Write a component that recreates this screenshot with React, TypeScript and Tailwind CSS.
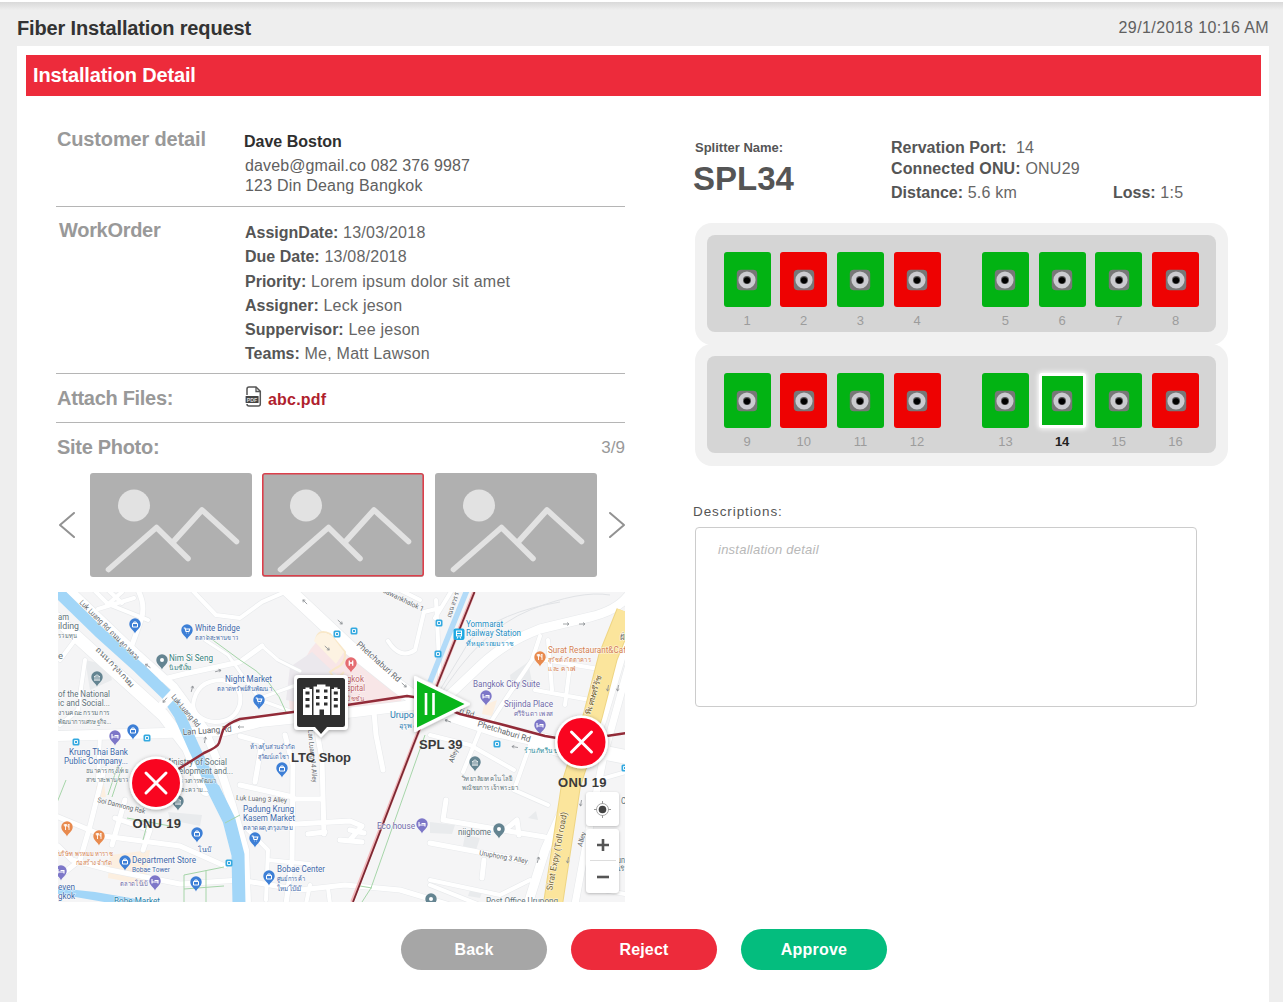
import React from "react";

type Port = { n: number; free: boolean; selected?: boolean };

const ROWS: Port[][] = [
  [1, 2, 3, 4, 5, 6, 7, 8].map((n) => ({ n, free: ![2, 4, 8].includes(n) })),
  [9, 10, 11, 12, 13, 14, 15, 16].map((n) => ({ n, free: ![10, 12, 16].includes(n), selected: n === 14 })),
];

const WORK_ORDER: [string, string][] = [
  ["AssignDate:", "13/03/2018"],
  ["Due Date:", "13/08/2018"],
  ["Priority:", "Lorem ipsum dolor sit amet"],
  ["Assigner:", "Leck jeson"],
  ["Suppervisor:", "Lee jeson"],
  ["Teams:", "Me, Matt Lawson"],
];

function Field({ label, value }: { label: string; value: string }) {
  return (
    <div className="whitespace-nowrap">
      <span className="font-bold">{label}</span>
      <span className="tracking-[0.24px] text-[#666]"> {value}</span>
    </div>
  );
}

function Socket() {
  return (
    <svg width="22" height="22" viewBox="0 0 22 22">
      <rect x="0.8" y="0.8" width="20.4" height="20.4" rx="4" fill="#777" />
      <circle cx="11" cy="11" r="8.6" fill="#cbcbd0" />
      <circle cx="11" cy="11" r="4" fill="#555" />
      <circle cx="11" cy="11.3" r="3.1" fill="#000" />
    </svg>
  );
}

function PortTile({ port }: { port: Port }) {
  const fill = port.free ? "bg-[#02b313]" : "bg-[#ee0202]";
  return (
    <div className="flex w-[47px] flex-col items-center">
      <div
        className={`flex h-[55px] w-[47px] items-center justify-center rounded-[3px] ${fill} ${
          port.selected ? "border-[3px] border-white shadow-[0_0_5px_1px_#ffffff]" : ""
        }`}
      >
        <Socket />
      </div>
      <span
        className={`mt-[6px] text-[13px] leading-[16px] ${
          port.selected ? "font-bold text-[#222]" : "text-[#9c9c9c]"
        }`}
      >
        {port.n}
      </span>
    </div>
  );
}

function PortRow({ ports }: { ports: Port[] }) {
  return (
    <div className="h-[122px] w-[533px] rounded-[17px] bg-[#f1f1f1] p-3">
      <div className="flex h-[97px] w-[509px] justify-between rounded-[8px] bg-[#d5d5d5] pt-[17px] pr-[17px] pl-[16.5px]">
        {[ports.slice(0, 4), ports.slice(4)].map((group, i) => (
          <div key={i} className="flex gap-[9.7px]">
            {group.map((p) => (
              <PortTile key={p.n} port={p} />
            ))}
          </div>
        ))}
      </div>
    </div>
  );
}

function Thumb({ active }: { active?: boolean }) {
  return (
    <div className="h-[103.500px] w-[162px] overflow-hidden rounded-[3px] bg-[#b0b0b0]">
      <svg width="162" height="104" viewBox="0 0 162 104" fill="none">
        <circle cx="44" cy="32.5" r="16" fill="#e2e2e2" />
        <g stroke="#e2e2e2" strokeWidth="5.6" strokeLinecap="round" strokeLinejoin="round">
          <path d="M18.5 96.5L66.5 54.5L98 85.5" />
          <path d="M84 68L112 37L146.500 68.500" />
        </g>
        {active && <rect x="0.8" y="0.8" width="160.400" height="102" rx="2" stroke="#dc3f4b" strokeWidth="1.600" />}
      </svg>
    </div>
  );
}

function PdfIcon() {
  return (
    <svg width="17" height="21" viewBox="0 0 17 21" fill="none" className="-mt-[3px]">
      <path d="M2 9V3Q2 1 4 1H11L15.300 5.300V18Q15.300 20 13.300 20H4Q2 20 2 18" stroke="#555" strokeWidth="1.5" />
      <path d="M11 1V5.500H15.300" stroke="#555" strokeWidth="1.3" />
      <rect x="0.600" y="10" width="13" height="7" rx="0.600" fill="#444" />
      <text x="1.800" y="15.700" fontSize="6" fontWeight="700" fill="#ddd" textLength="10.500" lengthAdjust="spacingAndGlyphs">PDF</text>
    </svg>
  );
}

const WHITE_ROADS: [string, number][] = [
  ["M56 618L100 658L163 715L188 748L206 790", 12],
  ["M70 590L136 653L174 687L204 728L219 765L232 805L245 850L247 904", 8],
  ["M56 736L165 733L225 731L260 722L347 713L430 703", 10],
  ["M288 590L318 618L350 648L395 684L425 706L500 731L560 744L626 757", 14],
  ["M430 713Q455 690 480 666T540 629L590 617Q616 611 628 596", 9],
  ["M626 640L602 720L572 790L545 850L528 904", 9],
  ["M628 668L604 755L585 850L575 904", 7],
  ["M94 590L108 604L148 620M108 590L122 603M106 606L122 592M98 609L134 598", 4],
  ["M138 590Q146 606 141 620L132 645", 5],
  ["M192 590L216 615L240 618L262 602L285 592", 4],
  ["M160 680L184 674L240 662L262 646", 5],
  ["M205 640L228 655L260 700L293 712", 3],
  ["M193 705Q196 680 222 680Q243 684 240 704Q235 722 215 722Q195 720 193 705Z", 4],
  ["M262 646L278 660L300 671M255 700L310 680", 3],
  ["M285 735L293 765L292 860L286 904M293 797L240 785M240 736L262 742L255 782", 5],
  ["M315 720L322 760L324 834M293 799L320 799M296 824L350 821L362 826L350 840M308 834L325 832M350 830L364 833M340 840L362 842", 5],
  ["M374 712L376 735L383 770", 5],
  ["M56 816L104 836L180 846L225 866", 5],
  ["M104 770L90 826L80 860L60 876M125 800L112 845M115 818L150 830L143 850", 5],
  ["M58 846L72 860L110 870L180 884L240 880L300 890L345 885L400 890L450 905", 5],
  ["M248 830L268 850L266 900M268 860L310 864M310 885L306 904M328 888L330 904", 4],
  ["M446 800L443 820L502 830L545 837M430 843L505 857L526 862M505 830L517 820L519 835M484 860L482 878", 5],
  ["M463 772L480 730M514 790L530 745L560 755M514 790L548 805M430 735L470 745L514 770", 4],
  ["M540 636L532 660L505 700L492 720M545 660L605 670M535 690L590 700M548 640L552 690M570 665L565 705", 4],
  ["M388 641Q400 660 415 650L424 612L440 608M420 600L400 590", 4],
  ["M452 590L435 618M436 600L440 680", 4],
  ["M430 885L480 905M430 880L500 895L530 880M602 890L625 894M598 780L626 772", 4],
  ["M60 660L75 640M85 660L78 710L60 725M100 735L98 780M60 590L76 605", 4],
];

type Tint = "blue" | "grey" | "purple" | "orange" | "red";
const TINTS: Record<Tint, string> = {
  blue: "#3d7fd6",
  grey: "#648491",
  purple: "#7d77c8",
  orange: "#e88a4e",
  red: "#e56b70",
};

const PINS: [number, number, Tint, "bag" | "cart" | "dot" | "bed" | "food" | "bank" | "H"][] = [
  [135, 625, "blue", "bag"], [187, 631, "blue", "cart"], [162, 661, "grey", "dot"], [97, 678, "grey", "bank"],
  [133, 731, "blue", "bag"], [115, 737, "purple", "bed"], [259, 701, "blue", "cart"], [351, 664, "red", "H"],
  [540, 658, "orange", "food"], [486, 697, "purple", "bed"], [540, 726, "purple", "bed"], [475, 763, "grey", "bank"],
  [499, 830, "grey", "dot"], [422, 825, "purple", "bed"], [282, 769, "blue", "bag"], [255, 839, "blue", "cart"],
  [269, 877, "blue", "bag"], [197, 834, "blue", "bag"], [196, 883, "blue", "bag"], [125, 862, "blue", "bag"],
  [155, 882, "purple", "bed"], [67, 828, "orange", "food"], [99, 837, "orange", "food"], [61, 872, "purple", "bed"],
  [178, 802, "grey", "bank"], [431, 900, "grey", "dot"],
];

function Pin({ x, y, tint, glyph }: { x: number; y: number; tint: Tint; glyph: string }) {
  return (
    <g transform={`translate(${x} ${y})`}>
      <path d="M0 8.500C-1 5-5.700 3.500-5.700-1A5.700 5.700 0 0 1 5.700-1C5.700 3.500 1 5 0 8.500Z" fill={TINTS[tint]} />
      {glyph === "bag" && <path d="M-2.500 -1.500H2.500V2H-2.500ZM-1.200-1.500V-3H1.200V-1.500" fill="none" stroke="#fff" strokeWidth="1" />}
      {glyph === "cart" && <path d="M-3.300-3H-2L-1 0.500H2L2.800-2H-1.500M-1 2H-0.500M1.500 2H2" fill="none" stroke="#fff" strokeWidth="1.100" />}
      {glyph === "dot" && <circle cy="-1" r="2" fill="#fff" />}
      {glyph === "bed" && <path d="M-3-3V1.500M-3 0H3V1.500M-0.500-1.500H3V0" fill="none" stroke="#fff" strokeWidth="1.100" />}
      {glyph === "food" && <path d="M-1.500-4V2M-2.700-4V-2H-0.300V-4M2-4V2M2-4Q0.800-3 1-1H2" fill="none" stroke="#fff" strokeWidth="0.900" />}
      {glyph === "bank" && <path d="M-3-1L0-3.200L3-1ZM-2 0V2M0 0V2M2 0V2M-3 2.200H3" fill="none" stroke="#fff" strokeWidth="0.800" />}
      {glyph === "H" && <path d="M-1.700-3.500V1.700M1.700-3.500V1.700M-1.700-1H1.700" fill="none" stroke="#fff" strokeWidth="1.300" />}
    </g>
  );
}

type Label = { t: string; x: number; y: number; w: number; c: string; s?: number; r?: number };
const B = "#3e68a8";
const G = "#5f7379";
const P = "#6f6aa8";
const O = "#d47f51";
const T = "#268fc4";
const K = "#62666a";

const LABELS: Label[] = [
  { t: "White Bridge", x: 195, y: 631, w: 45, c: B },
  { t: "ตลาดสะพานขาว", x: 195, y: 640, w: 43, c: B, s: 7 },
  { t: "Nim Si Seng", x: 169, y: 661, w: 44, c: "#35827c" },
  { t: "นิมซีเส็ง", x: 169, y: 670, w: 22, c: "#35827c", s: 7 },
  { t: "am", x: 58, y: 620, w: 11, c: G },
  { t: "ilding", x: 58, y: 629, w: 21, c: G },
  { t: "รวมทุน", x: 58, y: 638, w: 19, c: G, s: 7 },
  { t: "e", x: 58, y: 659, w: 5, c: G },
  { t: "of the National", x: 58, y: 697, w: 52, c: G },
  { t: "ic and Social...", x: 58, y: 706, w: 52, c: G },
  { t: "งานคณะกรรมการ", x: 58, y: 715, w: 52, c: G, s: 7 },
  { t: "พัฒนาการเศรษฐกิจ...", x: 58, y: 724, w: 53, c: G, s: 7 },
  { t: "Night Market", x: 225, y: 682, w: 47, c: B },
  { t: "ตลาดทรัพย์สินพัฒนา", x: 217, y: 691, w: 55, c: B, s: 7 },
  { t: "Krung Thai Bank", x: 69, y: 755, w: 59, c: B },
  { t: "Public Company...", x: 64, y: 764, w: 64, c: B },
  { t: "ธนาคารกรุงไทย", x: 86, y: 773, w: 42, c: G, s: 7 },
  { t: "สาขาสะพานขาว", x: 86, y: 782, w: 42, c: G, s: 7 },
  { t: "Ministry of Social", x: 164, y: 765, w: 63, c: G },
  { t: "Development and...", x: 166, y: 774, w: 67, c: G },
  { t: "กระทรวงการพัฒนา", x: 166, y: 783, w: 50, c: G, s: 7 },
  { t: "สังคมและความ...", x: 163, y: 792, w: 45, c: G, s: 7 },
  { t: "โบเบ๊", x: 198, y: 852, w: 13, c: B, s: 7 },
  { t: "Department Store", x: 132, y: 863, w: 64, c: B },
  { t: "Bobae Tower", x: 132, y: 872, w: 38, c: B, s: 7 },
  { t: "ตลาดโบ๊เบ๊", x: 120, y: 886, w: 27, c: P, s: 7 },
  { t: "บริษัท พรหมมหาราช", x: 58, y: 856, w: 55, c: O, s: 7 },
  { t: "ก่อสร้าง จำกัด", x: 76, y: 865, w: 36, c: O, s: 7 },
  { t: "even", x: 58, y: 890, w: 17, c: B },
  { t: "gkok", x: 58, y: 899, w: 17, c: B },
  { t: "Bobe Market", x: 114, y: 904, w: 46, c: "#287fa8" },
  { t: "ห้างหุ้นส่วนจำกัด", x: 250, y: 749, w: 45, c: B, s: 7 },
  { t: "สุวัฒน์เดโชา", x: 258, y: 759, w: 31, c: B, s: 7 },
  { t: "Luk Luang 3 Alley", x: 236, y: 800, w: 51, c: K, s: 7, r: 3 },
  { t: "Padung Krung", x: 243, y: 812, w: 51, c: B },
  { t: "Kasem Market", x: 243, y: 821, w: 52, c: B },
  { t: "ตลาดผดุงกรุงเกษม", x: 243, y: 830, w: 50, c: B, s: 7 },
  { t: "Bobae Center", x: 277, y: 872, w: 48, c: B },
  { t: "ศูนย์การค้า", x: 277, y: 881, w: 28, c: B, s: 7 },
  { t: "ใหม่โบ๊เบ๊", x: 277, y: 891, w: 24, c: B, s: 7 },
  { t: "Bangkok", x: 333, y: 682, w: 31, c: "#bd6165" },
  { t: "Hospital", x: 337, y: 691, w: 28, c: "#bd6165" },
  { t: "มิชชั่น", x: 346, y: 701, w: 18, c: "#bd6165", s: 7 },
  { t: "Yommarat", x: 466, y: 627, w: 37, c: T },
  { t: "Railway Station", x: 466, y: 636, w: 55, c: T },
  { t: "ที่หยุดรถยมราช", x: 466, y: 646, w: 48, c: T, s: 7 },
  { t: "Surat Restaurant&Caf", x: 548, y: 653, w: 78, c: O },
  { t: "สุรัชต์ ภัตตาคาร", x: 548, y: 662, w: 43, c: O, s: 7 },
  { t: "และ คาเฟ่", x: 548, y: 671, w: 28, c: O, s: 7 },
  { t: "Bangkok City Suite", x: 473, y: 687, w: 67, c: P },
  { t: "Srijinda Place", x: 504, y: 707, w: 49, c: P },
  { t: "ศรีจินดา เพลส", x: 514, y: 716, w: 39, c: P, s: 7 },
  { t: "Urupong", x: 390, y: 718, w: 34, c: "#2b7db2" },
  { t: "อุรุพงษ์", x: 399, y: 728, w: 22, c: "#2b7db2", s: 7 },
  { t: "ร้านภัทรีน บ", x: 524, y: 753, w: 34, c: "#268a98", s: 7 },
  { t: "วิทยาลัยเทคโนโลยี", x: 462, y: 781, w: 50, c: G, s: 7 },
  { t: "พณิชยการ เจ้าพระยา", x: 462, y: 790, w: 56, c: G, s: 7 },
  { t: "niighome", x: 458, y: 835, w: 33, c: G },
  { t: "Eco house", x: 377, y: 829, w: 38, c: P },
  { t: "Post Office Urupong", x: 486, y: 904, w: 72, c: G },
  { t: "Luk Luang Rd ถนน ลูกหลวง", x: 79, y: 603, w: 82, c: K, s: 7.5, r: 45 },
  { t: "ถนน กรุงเกษม", x: 95, y: 650, w: 52, c: K, s: 8, r: 46 },
  { t: "Luk Luang Rd", x: 171, y: 697, w: 40, c: K, s: 7.5, r: 50 },
  { t: "Lan Luang Rd", x: 183, y: 735, w: 49, c: K, s: 8.5, r: -4 },
  { t: "Soi Damrong Rak", x: 97, y: 802, w: 49, c: K, s: 7, r: 14 },
  { t: "Lan Luang 14 Alley", x: 308, y: 730, w: 53, c: K, s: 7, r: 85 },
  { t: "Phetchaburi Rd", x: 356, y: 645, w: 56, c: K, s: 8.5, r: 42 },
  { t: "Sawankhalok 1", x: 382, y: 592, w: 45, c: K, s: 7, r: 26 },
  { t: "Phetchaburi Rd", x: 477, y: 726, w: 55, c: K, s: 8, r: 17 },
  { t: "ri Rd", x: 459, y: 713, w: 15, c: K, s: 8, r: 17 },
  { t: "ถนน สวรร", x: 451, y: 618, w: 26, c: K, s: 7, r: -72 },
  { t: "พิเศษศรีรัช", x: 590, y: 715, w: 40, c: "#71602d", s: 8, r: -73 },
  { t: "Sirat Expy (Toll road)", x: 552, y: 891, w: 80, c: "#71602d", s: 8.5, r: -79 },
  { t: "Uruphong 3 Alley", x: 479, y: 855, w: 49, c: K, s: 7, r: 10 },
  { t: "Alley", x: 453, y: 763, w: 14, c: K, s: 7, r: -69 },
  { t: "Alley", x: 582, y: 847, w: 15, c: K, s: 7, r: -75 },
  { t: "un", x: 617, y: 863, w: 8, c: G },
  { t: "เริ", x: 618, y: 871, w: 7, c: G, s: 7 },
  { t: "C", x: 621, y: 804, w: 5, c: G },
  { t: "ฝั่", x: 620, y: 640, w: 5, c: K, s: 8 },
];

const TRANSIT: [number, number][] = [
  [76, 742], [147, 738], [337, 634], [354, 631], [439, 623], [438, 654], [497, 744], [229, 863], [625, 768],
];

const ARROWS = [
  [148, 666, 215], [218, 671, -15], [192, 689, -75], [165, 700, 130], [205, 740, -80], [241, 727, 180],
  [305, 602, 225], [340, 622, 42], [327, 648, 42], [404, 685, 42], [448, 721, 200], [566, 624, 0],
  [582, 624, 0], [608, 688, 100], [618, 688, 100], [581, 803, 100], [538, 860, -75], [568, 860, 100], [515, 747, 190],
];

function OnuPin({ x, y, lx }: { x: number; y: number; lx: number }) {
  return (
    <g>
      <circle cx={x} cy={y} r="26.500" fill="#fff" filter="url(#soft)" />
      <circle cx={x} cy={y} r="24" fill="#f90520" />
      <path d={`M${x - 10} ${y - 10}L${x + 10} ${y + 10}M${x + 10} ${y - 10}L${x - 10} ${y + 10}`} stroke="#fff" strokeWidth="3" strokeLinecap="round" />
      <text x={lx} y={y + 45} fontSize="13" fontWeight="700" fill="#3a3a3a" textLength="48.500">ONU 19</text>
    </g>
  );
}

function SiteMap() {
  return (
    <div className="relative h-[310px] w-[567px] overflow-hidden">
      <svg width="567" height="310" viewBox="58 592 567 310" fill="none" className="block font-[Roboto,'Noto_Sans',sans-serif]">
        <defs>
          <filter id="soft" x="-30%" y="-30%" width="160%" height="160%">
            <feDropShadow dx="0" dy="1" stdDeviation="2" floodColor="#000" floodOpacity="0.350" />
          </filter>
        </defs>
        <rect x="58" y="592" width="567" height="310" fill="#f5f5f6" />
        <path d="M310 650L330 625L405 690L400 704L290 712L288 690Z" fill="#f8e6e7" />
        <path d="M290 667L312 652L340 678L310 705L286 700Z" fill="#ebe8ed" />
        <path d="M110 855L150 850L145 885L108 878ZM96 786L104 784L106 797L96 798ZM484 705L497 700L492 716L482 714Z" fill="#fcefe0" />
        <path d="M85 660L108 665L112 680L90 690ZM510 675L528 662L532 682L512 692ZM430 822L455 825L452 834L430 833ZM465 835L480 838L476 850L463 846ZM470 890L482 892L480 898L468 896ZM168 812L202 815L200 826L170 820ZM528 818L536 811L538 820Z" fill="#e9ebed" />
        <g strokeLinejoin="round" strokeLinecap="round">
          {WHITE_ROADS.map(([d, w], i) => (
            <path key={`c${i}`} d={d} stroke="#e8eaec" strokeWidth={w + 1.2} />
          ))}
          {WHITE_ROADS.map(([d, w], i) => (
            <path key={`r${i}`} d={d} stroke="#fff" strokeWidth={w} />
          ))}
        </g>
        <path d="M316 640Q318 628 330 634L345 652Q346 664 336 668L330 672L336 680L344 672" stroke="#f9e8c9" strokeWidth="2" />
        <path d="M314 641Q318 628 332 636L344 652L336 664Z" fill="#fdf3e2" />
        <path d="M56 590L99 632L139 668L166 694L179 714L194 748L213 788L229 820L238 855L239 904" stroke="#a2d6f8" strokeWidth="11.500" strokeLinejoin="round" />
        <path d="M213 788L229 820L238 855L239 904" stroke="#a2d6f8" strokeWidth="13" />
        <path d="M58 888L95 892L160 903L110 903L58 894Z" fill="#a2d6f8" />
        <path d="M467 590L450 632L430 682" stroke="#b3dbf8" strokeWidth="5.500" />
        <path d="M440 690L470 640Q500 612 560 602M437 700Q480 630 530 610T610 595" stroke="#e1e3e6" strokeWidth="1" />
        <path d="M160 708L175 692" stroke="#fff" strokeWidth="9" />
        <path d="M626 612L608 657L593 715L571 785L553 904" stroke="#eed584" strokeWidth="20" />
        <path d="M626 612L608 657L593 715L571 785L553 904" stroke="#fbe59c" strokeWidth="18" />
        <path d="M206 635L240 660Q275 680 286 712M425 735L371 888L362 902M360 886L372 888M56 805L66 780M108 795L118 765M112 797L122 767M127 818L170 826M184 875V902M184 875L224 867M184 889L224 886M206 870V902M143 840L147 825M225 823L240 815" stroke="#a6d5a9" strokeWidth="1" />
        <path d="M474 592L415 740L352 902" stroke="#f3b9bc" strokeWidth="3.500" />
        <path d="M474.500 592L436 688L413 746L353 902" stroke="#7d2832" strokeWidth="1.800" />
        {TRANSIT.map(([x, y]) => (
          <g key={`${x}-${y}`}>
            <rect x={x - 3.500} y={y - 3.500} width="7" height="7" rx="1.500" fill="#34a9e0" />
            <path d={`M${x - 1.500} ${y - 1.500}h3v3h-3z`} stroke="#fff" strokeWidth="0.900" />
          </g>
        ))}
        <rect x="453.500" y="628.500" width="11" height="11.500" rx="2" fill="#1da8e2" />
        <path d="M456.500 631H461.500V636H456.500ZM456.500 633.500H461.500M457 638.500L458 637M461 638.500L460 637" stroke="#fff" strokeWidth="1.100" />
        {ARROWS.map(([x, y, r], i) => (
          <path key={i} d="M-3 0H3M1-1.500L3 0L1 1.500" transform={`translate(${x} ${y}) rotate(${r})`} stroke="#8b8f93" strokeWidth="0.800" />
        ))}
        {LABELS.map((l, i) => (
          <text
            key={i}
            x={l.x}
            y={l.y}
            fontSize={l.s ?? 8.5}
            fill={l.c}
            textLength={l.w}
            lengthAdjust="spacingAndGlyphs"
            transform={l.r ? `rotate(${l.r} ${l.x} ${l.y})` : undefined}
            stroke="#fff"
            strokeWidth="1.200"
            paintOrder="stroke"
            strokeOpacity="0.700"
          >
            {l.t}
          </text>
        ))}
        {PINS.map(([x, y, tint, glyph]) => (
          <Pin key={`${x}-${y}`} x={x} y={y} tint={tint} glyph={glyph} />
        ))}
        <path d="M156 783L204 753Q218 747 219 743L223 730Q226 724 240 719L293 712L347 705L407 696L420 698L460 714L500 724L545 736L580 742L600 737L626 733" stroke="#922b38" strokeWidth="2.500" strokeLinejoin="round" />

        <g className="font-['Liberation_Sans',Arial,sans-serif]">
          <path d="M298 675H344Q348 675 348 679V726Q348 730 344 730H328.500L321 737.500L313.500 730H298Q294 730 294 726V679Q294 675 298 675Z" fill="#fff" filter="url(#soft)" />
          <path d="M299.500 678H342.500Q345 678 345 680.500V724.500Q345 727 342.500 727H327L321 734L315 727H299.500Q297 727 297 724.500V680.500Q297 678 299.500 678Z" fill="#2f2f2f" />
          <path d="M303 689H305.500V687.500H309.500V689H312V715H303ZM313.500 686.500H317V684.500H325.500V686.500H330V715H324V709.500H319.500V715H313.500ZM331.500 689H334V687.500H337.500V689H340V715H331.500Z" fill="#fff" />
          <path d="M305.500 693H309.500M305.500 699.500H309.500M305.500 706H309.500M333.800 693H337.800M333.800 699.500H337.800M333.800 706H337.800M316 691H319.500M324 691H327.500M316 697.500H319.500M324 697.500H327.500M316 704H319.500M324 704H327.500" stroke="#2f2f2f" strokeWidth="3.200" />
          <text x="291" y="762" fontSize="13" fontWeight="700" fill="#3a3a3a" textLength="60">LTC Shop</text>

          <path d="M415 677L469 704L415 731Z" fill="#fff" stroke="#fff" strokeWidth="2" strokeLinejoin="round" filter="url(#soft)" />
          <path d="M417 681L464.500 704L417 727.500Z" fill="#08b51a" />
          <path d="M426 693V715M433.500 693V715" stroke="#fff" strokeWidth="2.600" />
          <text x="419" y="749" fontSize="13" fontWeight="700" fill="#3a3a3a" textLength="43.500">SPL 39</text>

          <OnuPin x={156} y={783} lx={132.5} />
          <OnuPin x={581.5} y={742} lx={558} />
        </g>
      </svg>

      <div className="absolute top-[200px] left-[528px] flex w-[33px] flex-col gap-[3px] text-[#555]">
        <button className="flex h-[34px] items-center justify-center rounded-[3px] bg-white shadow-[0_1px_3px_#00000040]">
          <svg width="17" height="17" viewBox="0 0 17 17" fill="none">
            <circle cx="8.500" cy="8.500" r="6" stroke="#aaa" strokeWidth="1" />
            <path d="M8.500 0V3M8.500 14V17M0 8.500H3M14 8.500H17" stroke="#999" strokeWidth="1" />
            <circle cx="8.500" cy="8.500" r="3.800" fill="#444" />
          </svg>
        </button>
        <div className="flex h-[64px] flex-col items-center rounded-[3px] bg-white shadow-[0_1px_3px_#00000040]">
          <button className="flex h-8 w-[26px] items-center justify-center border-b border-[#ddd]">
            <svg width="12" height="12" viewBox="0 0 12 12">
              <path d="M6 0V12M0 6H12" stroke="#555" strokeWidth="2.600" />
            </svg>
          </button>
          <button className="flex h-8 w-[26px] items-center justify-center">
            <svg width="12" height="4" viewBox="0 0 12 4">
              <path d="M0 2H12" stroke="#555" strokeWidth="2.600" />
            </svg>
          </button>
        </div>
      </div>
    </div>
  );
}

function Chevron({ right }: { right?: boolean }) {
  return (
    <svg width="16" height="26" viewBox="0 0 16 26" fill="none" stroke="#929292" strokeWidth="2" strokeLinecap="round" strokeLinejoin="round">
      <path d={right ? "M1 1L15 13L1 25" : "M15 1L1 13L15 25"} />
    </svg>
  );
}

export default function App() {
  return (
    <div className="h-[1002px] w-[1283px] overflow-hidden border-t-2 border-white bg-[linear-gradient(#d9d9d9,#eeeeee_8px)] pr-[14px] pl-[17px] font-['Liberation_Sans',Arial,sans-serif] text-[#555]">
      <header className="flex h-11 items-center justify-between pt-[7px]">
        <h1 className="text-[20px] font-bold tracking-[-0.15px] text-[#333]">Fiber Installation request</h1>
        <time className="pt-px text-base tracking-[0.4px] text-[#606060]">29/1/2018 10:16 AM</time>
      </header>

      <main className="h-[956px] bg-white px-[9px] pt-[9px] pr-2">
        <h2 className="h-[41px] bg-[#ed2b3b] pl-[7px] text-[20px] leading-[40px] font-bold tracking-[-0.15px] text-white">
          Installation Detail
        </h2>

        <div className="flex pl-[30px]">
          <section className="w-[569px]">
            <div className="flex h-[111px] border-b border-[#b5b5b5] pt-[30px]">
              <h3 className="w-[188px] pl-px text-[20px] leading-[26px] font-bold tracking-[-0.15px] text-[#999]">Customer detail</h3>
              <div className="pt-1 text-base text-[#606060]">
                <div className="leading-[24px] font-bold text-[#2f2f2f]">Dave Boston</div>
                <div className="pt-0.5 pl-px leading-[19.5px] tracking-[0.12px]">daveb@gmail.co 082 376 9987</div>
                <div className="pl-px leading-[19.5px] tracking-[0.2px]">123 Din Deang Bangkok</div>
              </div>
            </div>

            <div className="flex h-[167px] border-b border-[#b5b5b5] pt-[10px]">
              <h3 className="w-[189px] pl-[3px] text-[20px] leading-[26px] font-bold tracking-[-0.3px] text-[#999]">WorkOrder</h3>
              <div className="pt-1 text-base leading-[24.3px]">
                {WORK_ORDER.map(([label, value]) => (
                  <Field key={label} label={label} value={value} />
                ))}
              </div>
            </div>

            <div className="flex h-[49px] items-center border-b border-[#b5b5b5]">
              <h3 className="w-[189px] pl-px text-[20px] font-bold tracking-[-0.3px] text-[#999]">Attach Files:</h3>
              <PdfIcon />
              <a className="pt-[3px] pl-[6px] text-base font-bold tracking-[0.2px] text-[#b01f2e]">abc.pdf</a>
            </div>

            <div className="flex h-[50px] items-center justify-between pl-px">
              <h3 className="-mt-0.5 text-[20px] font-bold tracking-[-0.3px] text-[#999]">Site Photo:</h3>
              <span className="text-[17px] text-[#999]">3/9</span>
            </div>

            <div className="flex h-[104px] items-center justify-between pl-[3px]">
              <Chevron />
              <div className="ml-[2px] flex gap-[10.5px]">
                <Thumb />
                <Thumb active />
                <Thumb />
              </div>
              <Chevron right />
            </div>

            <div className="mt-[15px] ml-[2px]">
              <SiteMap />
            </div>
          </section>

          <section className="pt-[41px] pl-[68px]">
            <div className="flex h-[86px]">
              <div className="w-[198px]">
                <div className="pl-0.5 text-[13px] leading-[22px] font-bold">Splitter Name:</div>
                <div className="text-[33px] leading-[39px] font-bold">SPL34</div>
              </div>
              <div className="text-base leading-[21px]">
                <Field label="Rervation Port:" value={"\u00a014"} />
                <div className="tracking-[0.12px]">
                  <Field label="Connected ONU:" value="ONU29" />
                </div>
                <div className="flex pt-[3px]">
                  <div className="w-[222px]">
                    <Field label="Distance:" value="5.6 km" />
                  </div>
                  <Field label="Loss:" value="1:5" />
                </div>
              </div>
            </div>

            <div className="pl-0.5">
              <PortRow ports={ROWS[0]} />
              <div className="-mt-px">
                <PortRow ports={ROWS[1]} />
              </div>
            </div>

            <div className="mt-[36px] text-[13.5px] leading-5 tracking-[0.9px]">Descriptions:</div>
            <textarea
              placeholder="installation detail"
              className="mt-[5px] ml-[2px] block h-[180px] w-[502px] resize-none rounded-[4px] border border-[#ccc] px-[22px] py-[13px] text-[13px] leading-[18px] tracking-[0.25px] italic placeholder:text-[#b8b8b8]"
            />
          </section>
        </div>

        <div className="mt-[27px] flex gap-6 pl-[375px] text-base font-bold tracking-[0.2px] text-white">
          <button className="h-[41px] w-[146px] rounded-full bg-[#a6a6a6]">Back</button>
          <button className="h-[41px] w-[146px] rounded-full bg-[#ed2b3b]">Reject</button>
          <button className="h-[41px] w-[146px] rounded-full bg-[#04bd7e]">Approve</button>
        </div>
      </main>
    </div>
  );
}
